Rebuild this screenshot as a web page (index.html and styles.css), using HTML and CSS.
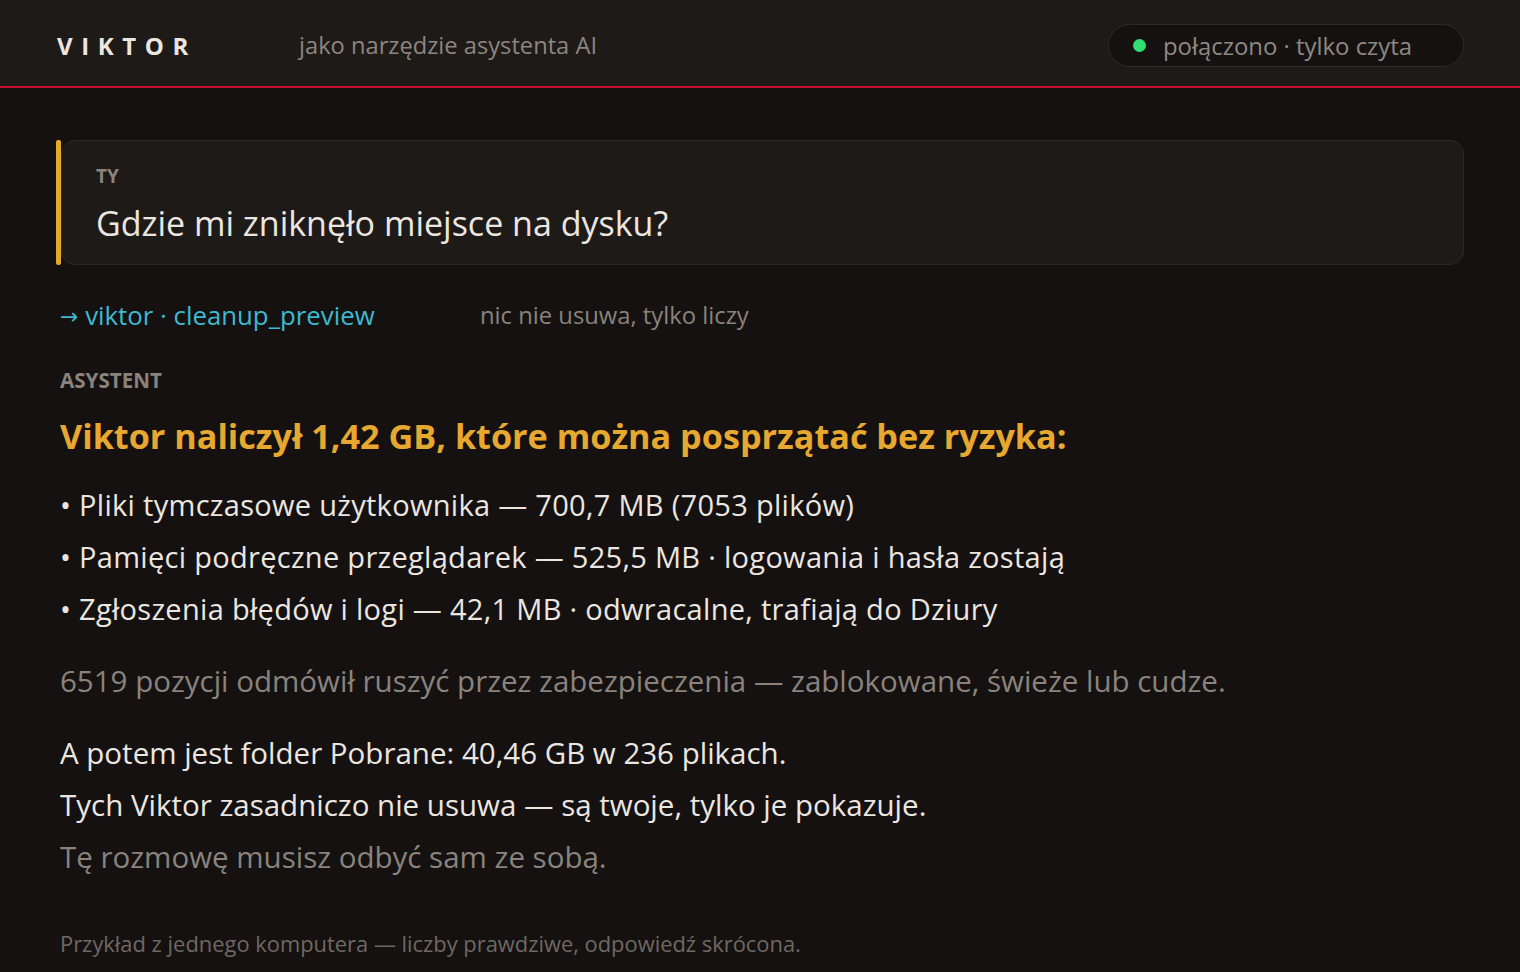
FILE: index.html
```html
<!DOCTYPE html>
<html lang="pl">
<head>
<meta charset="utf-8">
<title>Viktor</title>
<link rel="stylesheet" href="styles.css">
</head>
<body>
<header class="topbar">
  <div class="brand">VIKTOR</div>
  <div class="tagline">jako narzędzie asystenta AI</div>
  <div class="status"><span class="dot"></span><span>połączono · tylko czyta</span></div>
</header>
<main class="content">
  <section class="you-row">
    <div class="accent"></div>
    <div class="you-card">
      <div class="label">TY</div>
      <div class="question">Gdzie mi zniknęło miejsce na dysku?</div>
    </div>
  </section>
  <div class="tool-line">
    <span class="tool"><span class="arrow">→</span> viktor · cleanup_preview</span>
    <span class="tool-note">nic nie usuwa, tylko liczy</span>
  </div>
  <div class="label asst-label">ASYSTENT</div>
  <h1 class="headline">Viktor naliczył 1,42 GB, które można posprzątać bez ryzyka:</h1>
  <ul class="items">
    <li>• Pliki tymczasowe użytkownika — 700,7 MB (7053 plików)</li>
    <li>• Pamięci podręczne przeglądarek — 525,5 MB · logowania i hasła zostają</li>
    <li>• Zgłoszenia błędów i logi — 42,1 MB · odwracalne, trafiają do Dziury</li>
  </ul>
  <p class="muted refused">6519 pozycji odmówił ruszyć przez zabezpieczenia — zablokowane, świeże lub cudze.</p>
  <div class="closing">
    <p>A potem jest folder Pobrane: 40,46 GB w 236 plikach.</p>
    <p>Tych Viktor zasadniczo nie usuwa — są twoje, tylko je pokazuje.</p>
    <p class="muted">Tę rozmowę musisz odbyć sam ze sobą.</p>
  </div>
  <footer class="foot">Przykład z jednego komputera — liczby prawdziwe, odpowiedź skrócona.</footer>
</main>
</body>
</html>
```
FILE: styles.css
```css
* { box-sizing: border-box; }
html, body { margin: 0; padding: 0; }
body {
  background: #141110;
  color: #ece6e0;
  font-family: "Open Sans", "Noto Sans", sans-serif;
  width: 1520px;
  height: 972px;
  overflow: hidden;
}
.topbar {
  height: 88px;
  background: #1e1a18;
  border-bottom: 2px solid #c8102e;
  display: flex;
  align-items: center;
  padding: 4px 56px 0 57px;
}
.brand {
  font-size: 24px;
  font-weight: 700;
  letter-spacing: 8.6px;
  color: #ece6e0;
  width: 242px;
}
.tagline {
  font-size: 23.7px;
  color: #8c8580;
  flex: 1;
}
.status {
  display: flex;
  align-items: center;
  gap: 17px;
  height: 43px;
  width: 356px;
  padding: 0 24px;
  border-radius: 22px;
  background: #141110;
  border: 1px solid #2e2a27;
  font-size: 23.9px;
  color: #8f8883;
}
.dot {
  width: 13px; height: 13px; border-radius: 50%;
  background: #2fe070;
  flex: none;
}
.content { padding: 52px 56px 0 56px; }
.you-row {
  display: flex;
  height: 125px;
}
.accent {
  width: 5px;
  flex: none;
  background: #e3a92d;
  border-radius: 2px;
}
.you-card {
  flex: 1;
  background: #1e1a18;
  border: 1px solid #2c2825;
  border-radius: 14px;
  padding: 22px 36px 0 34px;
}
.label {
  font-size: 19px;
  font-weight: 700;
  color: #8a837d;
  line-height: 26px;
}
.question {
  font-size: 34px;
  line-height: 48px;
  margin-top: 10px;
}
.tool-line {
  display: flex;
  margin: 30px 0 0 4px;
  line-height: 40px;
}
.tool { color: #3fb8d1; font-size: 25.8px; width: 420px; }
.arrow { font-family: "DejaVu Sans", sans-serif; font-size: 22px; position: relative; top: -1px; }
.tool-note { color: #8a837d; font-size: 23.8px; }
.asst-label { margin: 29px 0 0 4px; font-size: 20.6px; }
.headline {
  margin: 19px 0 0 4px;
  font-size: 34.2px;
  font-weight: 700;
  color: #e6a82e;
  line-height: 48px;
}
.items { list-style: none; margin: 19px 0 0 4px; padding: 0; }
.items li { font-size: 29px; line-height: 52px; letter-spacing: 0.3px; }
.muted { color: #8a837d; }
.refused { margin: 20px 0 0 4px; font-size: 29.5px; line-height: 52px; }
.closing { margin: 20px 0 0 4px; }
.closing p { margin: 0; font-size: 29.5px; line-height: 52px; }
.foot { margin: 46px 0 0 4px; font-size: 21.9px; color: #6f6863; line-height: 30px; }
```
